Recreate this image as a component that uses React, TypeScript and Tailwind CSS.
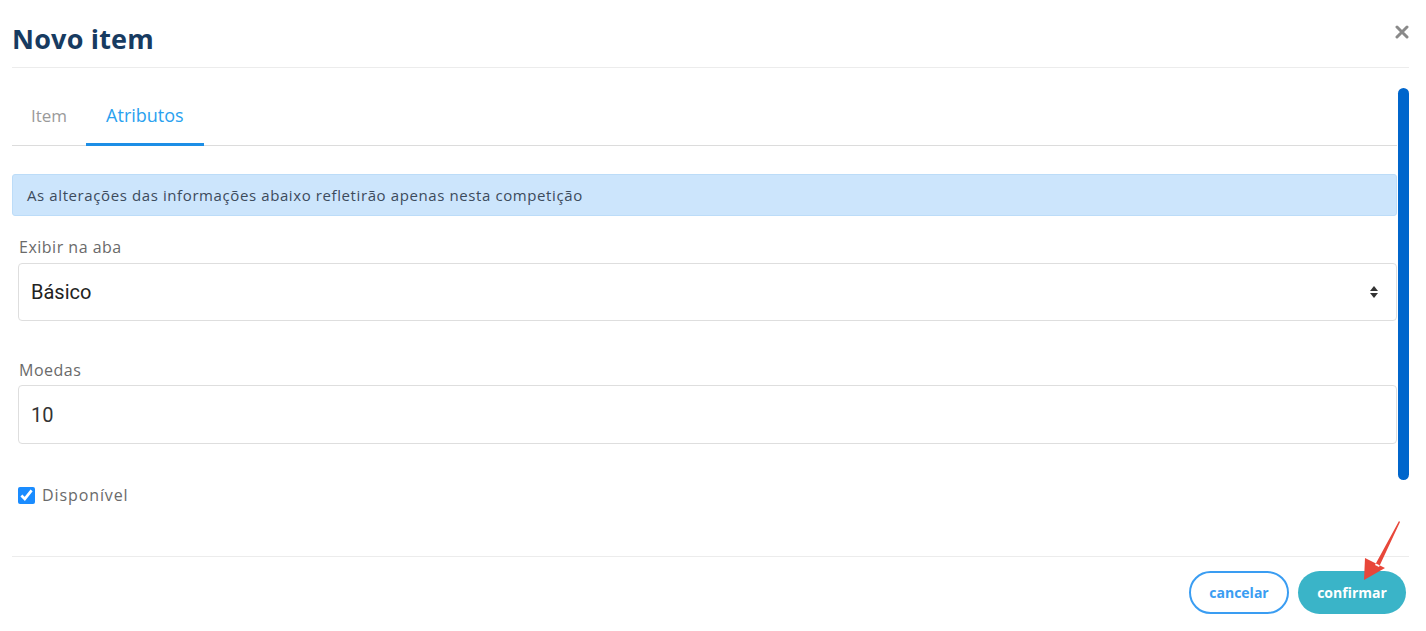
import { useState } from "react";

function SelectArrows() {
  return (
    <svg width="10" height="14" viewBox="0 0 10 14" className="text-[#333]">
      <path d="M5 1 L9 6 H1 Z" fill="currentColor" />
      <path d="M5 13 L9 8 H1 Z" fill="currentColor" />
    </svg>
  );
}

function CloseIcon() {
  return (
    <svg width="14" height="14" viewBox="0 0 14 14">
      <path d="M2 2 L12 12 M12 2 L2 12" stroke="#8a8a8a" strokeWidth="3" strokeLinecap="round" />
    </svg>
  );
}

function RedArrow() {
  // annotation arrow pointing at the confirm button
  return (
    <svg
      className="absolute left-[1350px] top-[518px] pointer-events-none"
      width="56"
      height="66"
      viewBox="0 0 56 66"
    >
      <path d="M49 3 L25 47 L29 49 L50 4 Z M14 62 L15 40 L35 50 Z" fill="#e8473a" />
    </svg>
  );
}

export default function App() {
  const [tab, setTab] = useState("atributos");
  const [available, setAvailable] = useState(true);

  return (
    <div className="relative w-full h-[631px] bg-white overflow-hidden pl-3 pr-[17px] font-['Open_Sans',sans-serif]">
      {/* Header */}
      <header className="h-[68px] flex items-end justify-between border-b border-[#ececec] pb-[11px]">
        <h1 className="text-[27px] leading-[34px] font-bold text-[#173b61] tracking-[0.2px]">Novo item</h1>
        <button className="self-start mt-[25px]">
          <CloseIcon />
        </button>
      </header>

      <div className="flex">
        <div className="flex-1 min-w-0">
          {/* Tabs */}
          <div className="mt-[20px] flex border-b border-[#dcdcdc]">
            <button
              onClick={() => setTab("item")}
              className={`h-[58px] px-[19px] flex items-center border-b-[3px] -mb-[1px] text-[17px] ${
                tab === "item" ? "border-[#1c8ee6] text-[#2aa1ef]" : "border-transparent text-[#9a9a9a]"
              }`}
            >
              Item
            </button>
            <button
              onClick={() => setTab("atributos")}
              className={`h-[58px] px-[20px] flex items-center border-b-[3px] -mb-[1px] text-[18px] ${
                tab === "atributos" ? "border-[#1c8ee6] text-[#2aa1ef]" : "border-transparent text-[#9a9a9a]"
              }`}
            >
              Atributos
            </button>
          </div>

          {/* Alert */}
          <div className="mt-[28px] h-[42px] flex items-center px-[14px] bg-[#cce5fc] border border-[#bcdcf8] rounded-[3px] text-[15px] tracking-[0.6px] text-[#3c4b5c]">
            As alterações das informações abaixo refletirão apenas nesta competição
          </div>

          {/* Exibir na aba */}
          <label className="block mt-[21px] ml-[7px] text-[16px] leading-[21px] tracking-[0.5px] text-[#6a6a6a]">
            Exibir na aba
          </label>
          <div className="mt-[5px] ml-[6px] h-[58px] flex items-center justify-between pl-[12px] pr-[17px] border border-[#dedede] rounded-[4px]">
            <span className="font-['Roboto',sans-serif] text-[20px] text-[#222]">Básico</span>
            <SelectArrows />
          </div>

          {/* Moedas */}
          <label className="block mt-[39px] ml-[7px] text-[16px] leading-[21px] tracking-[0.5px] text-[#6a6a6a]">
            Moedas
          </label>
          <div className="mt-[4px] ml-[6px] h-[59px] flex items-center pl-[12px] border border-[#dedede] rounded-[4px]">
            <span className="font-['Roboto',sans-serif] text-[20px] text-[#333]">10</span>
          </div>

          {/* Disponível */}
          <label className="mt-[39px] ml-[6px] flex items-center gap-[7px] text-[16px] tracking-[0.9px] text-[#6a6a6a]">
            <input
              type="checkbox"
              checked={available}
              onChange={(e) => setAvailable(e.target.checked)}
              className="w-[17px] h-[17px] m-0 accent-[#1a8cff]"
            />
            Disponível
          </label>
        </div>

        {/* Scrollbar */}
        <div className="w-[12px] pt-[20px] pl-[1px]">
          <div className="w-[11px] h-[392px] rounded-full bg-[#0066cc]" />
        </div>
      </div>

      {/* Footer */}
      <footer className="mt-[49px] border-t border-[#ececec] pt-[14px] flex justify-end gap-[9px] pr-[3px]">
        <button className="h-[43px] w-[100px] rounded-full border-2 border-[#3a9df2] text-[#3a9df2] text-[14px] font-bold">
          cancelar
        </button>
        <button className="h-[43px] w-[108px] rounded-full bg-[#3ab4c8] text-white text-[14px] font-bold">
          confirmar
        </button>
      </footer>

      <RedArrow />
    </div>
  );
}
